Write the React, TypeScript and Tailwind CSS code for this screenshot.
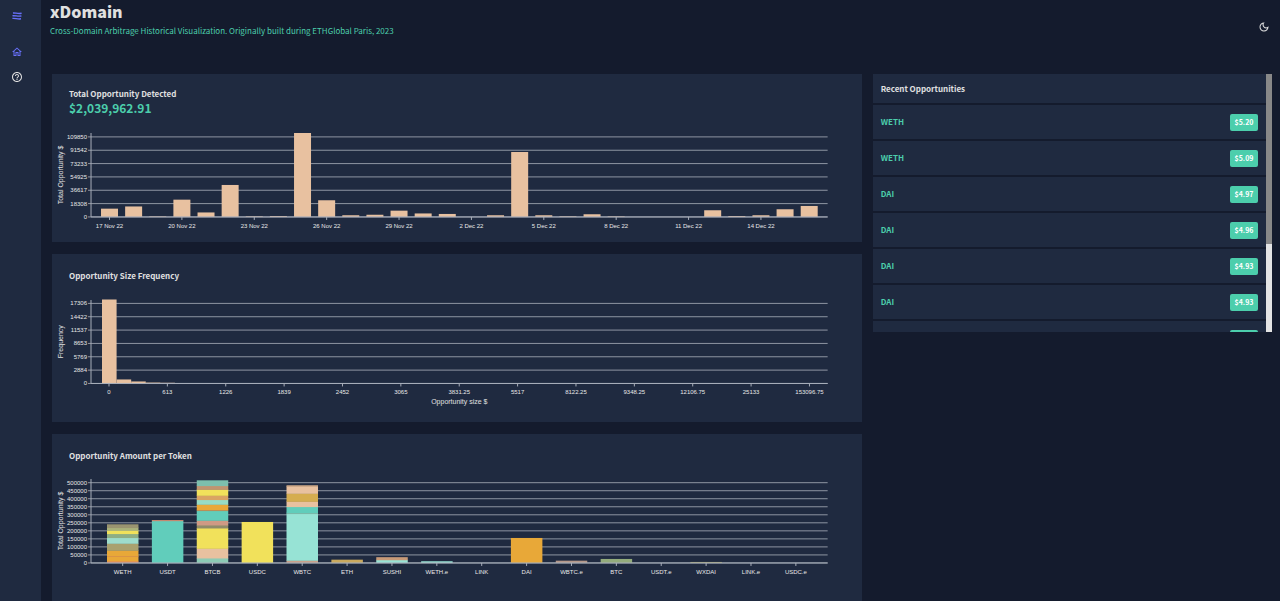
import type { ReactNode } from 'react';
import { MdHelpOutline, MdOutlineDarkMode, MdOutlineHome } from 'react-icons/md';

interface Segment {
  size: number;
  color: string;
}

interface Bar {
  x: number;
  width: number;
  segments: Segment[];
}

interface Tick {
  pos: number;
  label: string;
}

interface BarChartProps {
  title: string;
  height: number;
  top: number;
  baseline: number;
  bars: Bar[];
  xTicks: Tick[];
  yTicks: Tick[];
  yLegend: string;
  xLegend?: string;
}

// plot area, shared by the three charts
const WIDTH = 810;
const LEFT = 39;
const RIGHT = 776;

const PEACH = '#e8c1a0';
const TEAL = '#61cdbb';
const MINT = '#97e3d5';
const YELLOW = '#f1e15b';
const ORANGE = '#e8a838';

const makeYTicks = (labels: string[], baseline: number, step: number): Tick[] =>
  labels.map((label, i) => ({ pos: baseline - i * step, label }));

/* Daily totals */
const DAILY = [
  8.3, 10.5, 0.5, 17.3, 4.5, 32, 0.6, 0.9, 84, 16.7, 1.7, 2.2, 6.3, 3.5, 3,
  0, 1.7, 65, 1.7, 0.6, 2.7, 0.5, 0, 0, 0, 6.7, 0.9, 1.7, 7.7, 11,
];

const dailyBars: Bar[] = DAILY.map((size, i) => ({
  x: 49 + i * 24.14,
  width: 17,
  segments: [{ size, color: PEACH }],
}));

const dailyTicks: Tick[] = [
  '17 Nov 22', '20 Nov 22', '23 Nov 22', '26 Nov 22', '29 Nov 22',
  '2 Dec 22', '5 Dec 22', '8 Dec 22', '11 Dec 22', '14 Dec 22',
].map((label, i) => ({ pos: 57.5 + i * 72.42, label }));

/* Size frequency */
const frequencyBars: Bar[] = [84, 4, 2, 0.9, 0.7].map((size, i) => ({
  x: 50 + i * 14.6,
  width: 14.6,
  segments: [{ size, color: PEACH }],
}));

const frequencyTicks: Tick[] = [
  '0', '613', '1226', '1839', '2452', '3065', '3831.25',
  '5517', '8122.25', '9348.25', '12106.75', '25133', '153096.75',
].map((label, i) => ({ pos: 57 + i * 58.4, label }));

/* Per token, segments from the bottom up */
const TOKENS: { name: string; parts: [number, string][] }[] = [
  {
    name: 'WETH',
    parts: [
      [2, '#e08a62'], [4.5, ORANGE], [0.7, '#d8904a'], [5.5, ORANGE], [7, '#a9a16e'],
      [5.7, '#9edccb'], [4, '#8fae84'], [3.3, YELLOW], [2.7, '#a9b27a'], [3.3, '#9a9470'],
    ],
  },
  { name: 'USDT', parts: [[42.3, TEAL], [0.6, '#d08a70']] },
  {
    name: 'BTCB',
    parts: [
      [5, '#8ccbb5'], [9.7, PEACH], [20.3, YELLOW], [3, '#8f8b6a'], [4.7, '#cf9a84'],
      [9.7, TEAL], [1, '#b58d5c'], [5.3, ORANGE], [4.7, '#97dcc4'], [4.3, '#d9a463'],
      [6, YELLOW], [3.7, '#c09470'], [5.3, '#7dbfad'],
    ],
  },
  { name: 'USDC', parts: [[41, YELLOW]] },
  {
    name: 'WBTC',
    parts: [
      [2.7, '#c8a08a'], [46.7, MINT], [1, '#7cb8a8'], [6, TEAL], [5.3, PEACH],
      [8, '#d5ad50'], [7, PEACH], [1, '#d9b08c'],
    ],
  },
  { name: 'ETH', parts: [[3.3, '#c9a95e']] },
  { name: 'SUSHI', parts: [[3.2, MINT], [2.6, '#c79a78']] },
  { name: 'WETH.e', parts: [[1.7, MINT]] },
  { name: 'LINK', parts: [] },
  { name: 'DAI', parts: [[25, ORANGE]] },
  { name: 'WBTC.e', parts: [[2.3, '#b5988a']] },
  { name: 'BTC', parts: [[4, '#93ab7c']] },
  { name: 'USDT.e', parts: [] },
  { name: 'WXDAI', parts: [[1, '#a8a56a']] },
  { name: 'LINK.e', parts: [] },
  { name: 'USDC.e', parts: [] },
];

const tokenBars: Bar[] = TOKENS.map(({ parts }, i) => ({
  x: 55 + i * 44.9,
  width: 31.5,
  segments: parts.map(([size, color]) => ({ size, color })),
}));

const tokenTicks: Tick[] = TOKENS.map(({ name }, i) => ({ pos: 70.7 + i * 44.9, label: name }));

const OPPORTUNITIES = [
  { token: 'WETH', value: '$5.20' },
  { token: 'WETH', value: '$5.09' },
  { token: 'DAI', value: '$4.97' },
  { token: 'DAI', value: '$4.96' },
  { token: 'DAI', value: '$4.93' },
  { token: 'DAI', value: '$4.93' },
  { token: 'DAI', value: '$4.92' },
];

function BarSegments({ bar, baseline }: { bar: Bar; baseline: number }) {
  let y = baseline;
  return (
    <>
      {bar.segments.map((segment, i) => {
        y -= segment.size;
        // overlap the segment below a little so that no seam shows
        const overlap = i > 0 ? 0.5 : 0;
        return (
          <rect
            key={i}
            x={bar.x}
            y={y}
            width={bar.width}
            height={segment.size + overlap}
            fill={segment.color}
          />
        );
      })}
    </>
  );
}

function BarChart({ title, height, top, baseline, bars, xTicks, yTicks, yLegend, xLegend }: BarChartProps) {
  const middle = (top + baseline) / 2;
  return (
    <svg
      viewBox={`0 0 ${WIDTH} ${height}`}
      role="img"
      aria-label={title}
      className="block w-full font-['Liberation_Sans',Arial,sans-serif]"
    >
      {/* Grid */}
      <g stroke="#8f96a3" strokeWidth="1">
        {yTicks.map((tick) => (
          <line key={tick.label} x1={LEFT - 3} x2={RIGHT} y1={tick.pos} y2={tick.pos} />
        ))}
      </g>

      {bars.map((bar, i) => (
        <BarSegments key={i} bar={bar} baseline={baseline} />
      ))}

      {/* Axes */}
      <g stroke="#a9afba" strokeWidth="1">
        <line x1={LEFT} x2={LEFT} y1={top} y2={baseline} />
        <line x1={LEFT} x2={RIGHT} y1={baseline} y2={baseline} />
        {xTicks.map((tick) => (
          <line key={tick.label} x1={tick.pos} x2={tick.pos} y1={baseline} y2={baseline + 3} />
        ))}
      </g>

      <g fill="#e8e8e8" fontSize="6">
        {yTicks.map((tick) => (
          <text key={tick.label} x={LEFT - 4} y={tick.pos + 2} textAnchor="end">{tick.label}</text>
        ))}
        {xTicks.map((tick) => (
          <text key={tick.label} x={tick.pos} y={baseline + 11} textAnchor="middle">{tick.label}</text>
        ))}
      </g>
      <g fill="#e0e0e0" fontSize="7" textAnchor="middle">
        <text transform={`translate(11 ${middle}) rotate(-90)`}>{yLegend}</text>
        {xLegend && <text x={(LEFT + RIGHT) / 2} y={baseline + 21}>{xLegend}</text>}
      </g>
    </svg>
  );
}

function Card({ title, amount, children }: { title: string; amount?: string; children: ReactNode }) {
  return (
    <section className="flex flex-col justify-between bg-[#1f2a40] pt-[14px]">
      <div className="px-[17px]">
        <h2 className={`text-[8px] leading-3 font-bold text-[#e0e0e0] ${amount ? '' : 'pt-[2px]'}`}>{title}</h2>
        {amount && <p className="text-[12px] leading-4 font-bold text-[#4cceac]">{amount}</p>}
      </div>
      {children}
    </section>
  );
}

function Sidebar() {
  return (
    <aside className="flex w-[41px] shrink-0 flex-col items-center bg-[#1f2a40] pt-[10px] pr-[7px]">
      <button type="button" aria-label="Toggle menu" className="p-px text-[#6870fa]">
        <svg viewBox="0 0 10 10" className="h-[10px] w-[10px]" fill="none" stroke="currentColor" strokeWidth="1.4">
          <path d="M1 2 C3 1.6 6 3 9.6 2.3" />
          <path d="M0.5 4.8 C3 4.4 6 5.6 9.4 5" />
          <path d="M0.4 7.4 C3 7 6 8.4 9 7.8" />
        </svg>
      </button>
      <nav className="mt-6 flex flex-col items-center gap-[13px]">
        <a href="#home" aria-label="Dashboard" className="text-[#6870fa]">
          <MdOutlineHome className="h-3 w-3" />
        </a>
        <a href="#faq" aria-label="FAQ" className="text-[#e0e0e0]">
          <MdHelpOutline className="h-3 w-3" />
        </a>
      </nav>
    </aside>
  );
}

function RecentOpportunities() {
  return (
    <section className="col-span-4 flex h-[258px]">
      <div className="flex-1 overflow-y-auto bg-[#1f2a40] [scrollbar-width:none]">
        <h2 className="border-b-2 border-[#141b2d] px-2 pt-[9px] pb-2 text-[8px] leading-3 font-bold text-[#e0e0e0]">
          Recent Opportunities
        </h2>
        <ul>
          {OPPORTUNITIES.map(({ token, value }, i) => (
            <li key={i} className="flex h-9 items-center justify-between border-b-2 border-[#141b2d] px-2">
              <span className="text-[8px] leading-3 font-bold text-[#4cceac]">{token}</span>
              <span className="w-7 rounded-xs bg-[#4cceac] text-center text-[7px] leading-[17px] font-bold text-white">
                {value}
              </span>
            </li>
          ))}
        </ul>
      </div>
      {/* Scroll track */}
      <div className="w-[6px] bg-[#e4e4e4]">
        <div className="h-[66%] bg-[#888888]" />
      </div>
    </section>
  );
}

export default function App() {
  return (
    <div className="flex h-screen overflow-hidden bg-[#141b2d] font-['Noto_Sans_CJK_SC','Noto_Sans',sans-serif]">
      <Sidebar />
      <main className="flex-1 pr-2 pl-[11px]">
        <header className="flex h-[74px] items-start justify-between">
          <div className="-ml-[2px]">
            <h1 className="text-[16px] leading-[22px] font-black text-[#e0e0e0]">xDomain</h1>
            <p className="mt-[3px] text-[8px] leading-3 text-[#4cceac]">
              Cross-Domain Arbitrage Historical Visualization. Originally built during ETHGlobal Paris, 2023
            </p>
          </div>
          <button type="button" aria-label="Toggle dark mode" className="mt-[21px] mr-[2px] text-[#e0e0e0]">
            <MdOutlineDarkMode className="h-3 w-3" />
          </button>
        </header>

        <div className="grid grid-cols-12 items-start gap-x-[11px]">
          <div className="col-span-8 grid auto-rows-[168px] gap-y-3">
            <Card title="Total Opportunity Detected" amount="$2,039,962.91">
              <BarChart
                title="Total Opportunity Detected"
                height={120}
                top={11}
                baseline={95}
                bars={dailyBars}
                xTicks={dailyTicks}
                yTicks={makeYTicks(['0', '18308', '36617', '54925', '73233', '91542', '109850'], 95, 13.35)}
                yLegend="Total Opportunity $"
              />
            </Card>
            <Card title="Opportunity Size Frequency">
              <BarChart
                title="Opportunity Size Frequency"
                height={132}
                top={10}
                baseline={93.5}
                bars={frequencyBars}
                xTicks={frequencyTicks}
                yTicks={makeYTicks(['0', '2884', '5769', '8653', '11537', '14422', '17306'], 93.5, 13.35)}
                yLegend="Frequency"
                xLegend="Opportunity size $"
              />
            </Card>
            <Card title="Opportunity Amount per Token">
              <BarChart
                title="Opportunity Amount per Token"
                height={133}
                top={10}
                baseline={94}
                bars={tokenBars}
                xTicks={tokenTicks}
                yTicks={makeYTicks(
                  ['0', '50000', '100000', '150000', '200000', '250000', '300000', '350000', '400000', '450000', '500000'],
                  94,
                  8.03,
                )}
                yLegend="Total Opportunity $"
              />
            </Card>
          </div>

          <RecentOpportunities />
        </div>
      </main>
    </div>
  );
}
